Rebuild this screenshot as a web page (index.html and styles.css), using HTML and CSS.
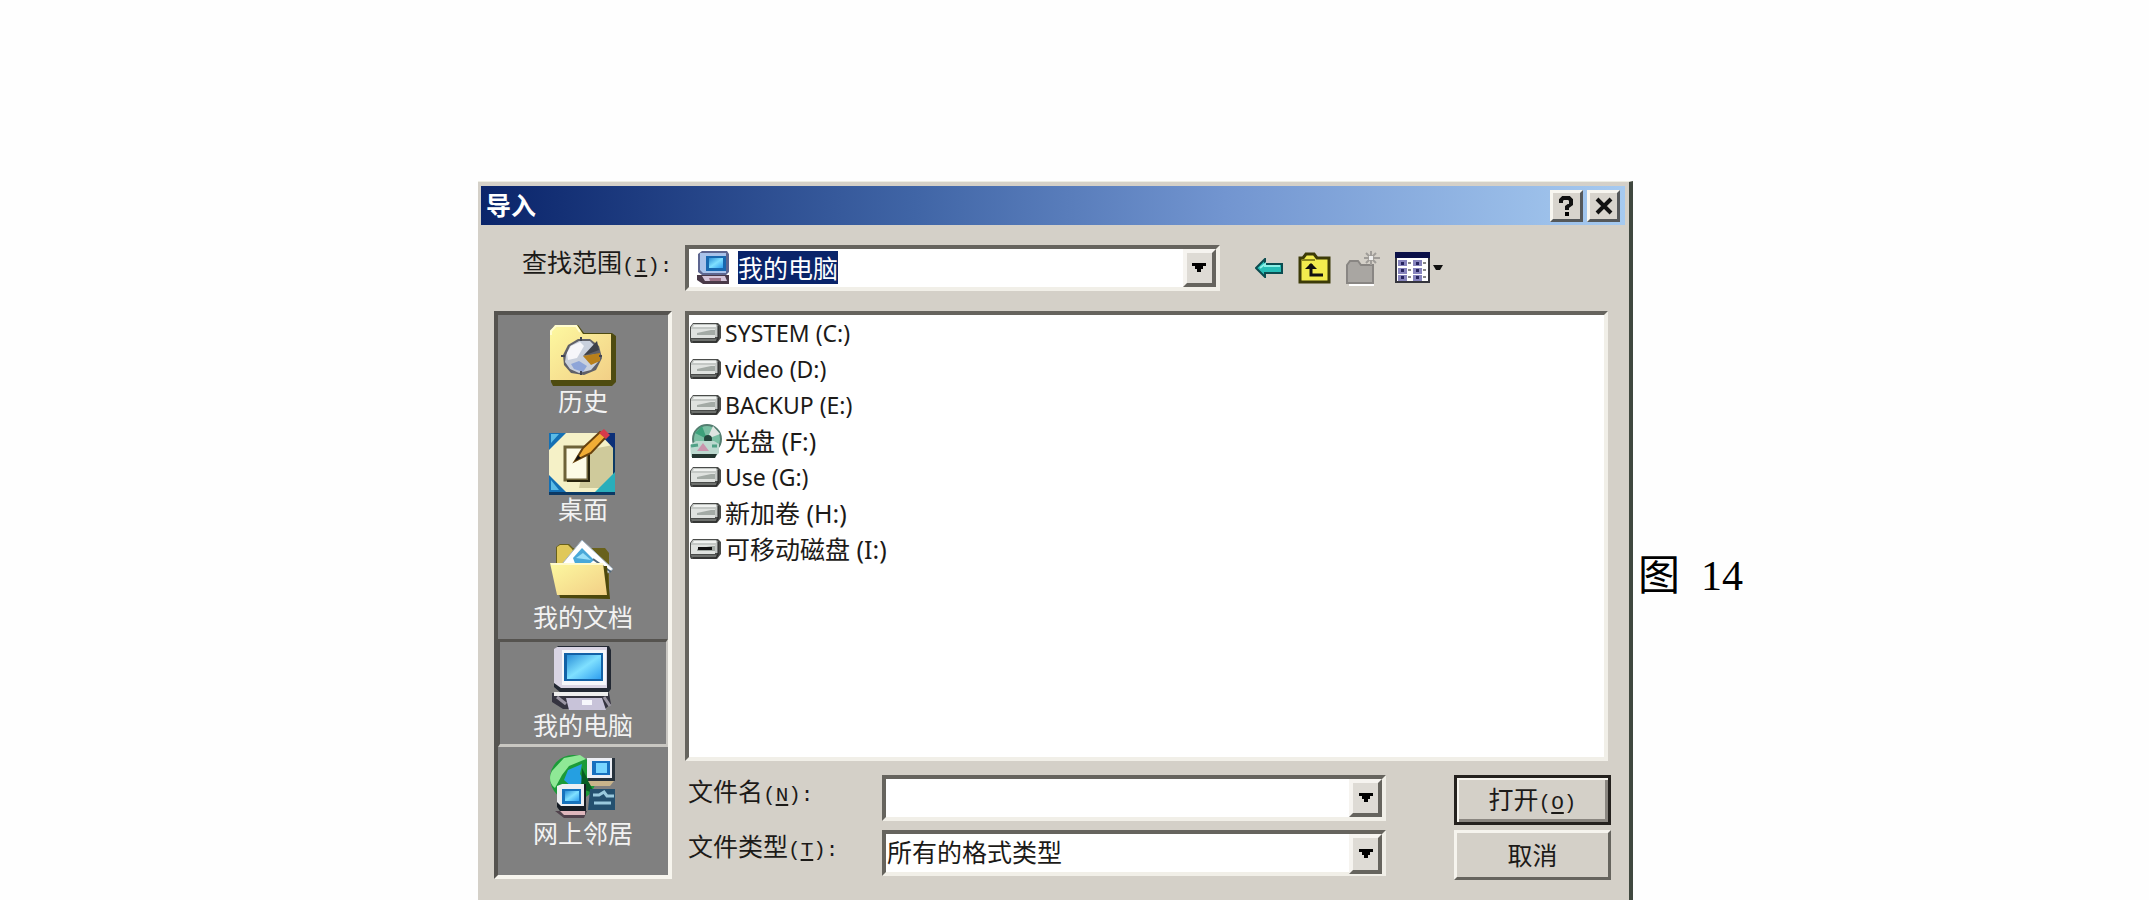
FILE: index.html
```html
<!DOCTYPE html>
<html lang="zh-CN">
<head>
<meta charset="utf-8">
<title>导入</title>
<link rel="stylesheet" href="styles.css">
</head>
<body>
<svg class="defs" aria-hidden="true">
  <defs>
    <linearGradient id="screen" x1="0" y1="0" x2="1" y2="1"><stop offset="0" stop-color="#2a8fd8"/><stop offset=".5" stop-color="#7fe0ff"/><stop offset="1" stop-color="#2f9ff0"/></linearGradient>
    <linearGradient id="paper" x1="0" y1="0" x2="1" y2="1"><stop offset="0" stop-color="#fdf9a0"/><stop offset="1" stop-color="#f2cf86"/></linearGradient>
    <symbol id="drive" viewBox="0 0 33 22">
      <path d="M4 1h25l3 3v12l-4 5H2l-1-2V5z" fill="#4a4c4a"/>
      <path d="M4 2h23l2 2v11H2V5z" fill="#c4c8c5"/>
      <path d="M5 3h22v2H4z" fill="#f0f2f0"/>
      <path d="M2 7v9h24V7z" fill="#dfe2df"/>
      <path d="M8 11l14-3h4v5H8z" fill="#a3aaa5"/>
      <path d="M2 17h25v2H3z" fill="#6d706d"/>
      <path d="M4 20h23l2-3v-13" fill="none" stroke="#222" stroke-width="1"/>
    </symbol>
    <symbol id="down" viewBox="0 0 16 10"><path d="M1 0h14v3h-3v3h-2v3H6V6H4V3H1z" fill="#000"/></symbol>
  </defs>
</svg>
<main class="page">
  <section class="dialog" aria-label="导入">
    <header class="titlebar">
      <h1>导入</h1>
      <button class="capbtn" aria-label="帮助"><svg width="17" height="20" viewBox="0 0 17 20"><path d="M3 7V4l2-2h6l2 2v4l-4 3v3" fill="none" stroke="#111" stroke-width="4"/><path d="M7 16h4v4H7z"/></svg></button>
      <button class="capbtn" aria-label="关闭"><svg width="18" height="18" viewBox="0 0 18 18"><path d="M2 2l14 14M16 2L2 16" stroke="#111" stroke-width="4"/></svg></button>
    </header>

    <div class="lookrow">
      <label for="look">查找范围<span class="key">(<u>I</u>):</span></label>
      <div class="combo look">
        <select id="look"><option>我的电脑</option></select>
        <svg class="pc" width="33" height="34" viewBox="0 0 33 34"><path d="M1 3l4-3h25l2 3v18l-3 3H5l-4-3z" fill="#5d6690"/><path d="M3 2h26v20H6l-3-3z" fill="#a9c3ea"/><path d="M9 5h20v15H9z" fill="#1768b0"/><path d="M12 7h14v10H12z" fill="url(#screen)"/><path d="M0 24h32v9H6l-6-4z" fill="#493947"/><path d="M5 25h23l2 5H8z" fill="#d4c4d8"/><path d="M12 27h12v3H13z" fill="#9b7286"/></svg>
        <span class="arrow"><svg width="16" height="10"><use href="#down"/></svg></span>
      </div>
      <div class="tools">
        <button aria-label="后退"><svg width="28" height="20" viewBox="0 0 28 20"><path d="M1 10L10 1v5h17v9H10v4z" fill="#27bdb6" stroke="#0b4c50" stroke-width="2"/><path d="M5 10l5-4v2h15" fill="none" stroke="#8af0e6" stroke-width="2"/></svg></button>
        <button aria-label="向上一级"><svg width="33" height="32" viewBox="0 0 33 32"><path d="M2 30V6h3l3-4h8l3 4h12v24z" fill="#f2ec4e" stroke="#3c3a08" stroke-width="3"/><path d="M4 8h13" stroke="#8d891e" stroke-width="2"/><path d="M13 12v11h12" fill="none" stroke="#111" stroke-width="3"/><path d="M7 17l6-6 6 6z" fill="#111"/></svg></button>
        <button aria-label="新建文件夹" disabled><svg width="34" height="36" viewBox="0 0 34 36"><path d="M3 33h25v3H3z" fill="#fff"/><path d="M1 33V15l3-4h8l3 4h12v18z" fill="#a9a6a2" stroke="#898683" stroke-width="2"/><path d="M25 1v14M18 8h16M20 3l10 10M30 3L20 13" stroke="#a09d99" stroke-width="2"/><path d="M23 6h4v4h-4z" fill="#eee"/></svg></button>
        <button aria-label="查看菜单"><svg width="48" height="31" viewBox="0 0 48 31"><path d="M1 1h33v29H1z" fill="#fff" stroke="#35353d" stroke-width="2"/><path d="M0 0h35v6H0z" fill="#0b1048"/><g fill="#8784bd"><path d="M3 8h9v6H3zM3 16h9v6H3zM3 23h9v6H3zM18 8h9v6h-9zM18 16h9v6h-9zM18 23h9v6h-9z"/></g><g fill="#27245f"><path d="M6 10h3v3H6zM6 17h3v3H6zM6 24h3v3H6zM21 10h3v3h-3zM21 17h3v3h-3zM21 24h3v3h-3z"/></g><path d="M13 11h3M13 18h3M13 25h3M28 11h3M28 18h3M28 25h3" stroke="#888" stroke-width="2"/><path d="M38 13h10l-3 5h-4z" fill="#111"/></svg></button>
      </div>
    </div>

    <div class="body">
      <nav class="places">
        <button><svg viewBox="0 0 68 66"><path d="M2 60V10l5-7h22l6 8h28l4 3v46l-4 4H4z" fill="#4e4b10"/><path d="M1 58V10l5-7h22l6 9h28v46z" fill="url(#paper)"/><path d="M2 13V9l5-5h20l4 6" fill="none" stroke="#fffcd0" stroke-width="2"/><path d="M14 33l5-10 10-6h12l9 7 3 12-6 12-12 5-13-2-7-8z" fill="#5f6068"/><path d="M17 33l4-9 9-5h11l6 6-12 9 14-2v8l-7 8-12 3-9-4-5-7z" fill="#c9d0dd"/><path d="M18 31l4-7 9-4 4 4-7 12-9 2z" fill="#f6f6fa"/><path d="M22 42l8-3 8 5-4 6-9-3z" fill="#8ea5d8"/><path d="M34 34l14-15 2 9z" fill="#3e4149"/><path d="M34 34l17-3v8l-9 4z" fill="#b9801b"/><path d="M12 34h4M32 15v4M32 49v4M50 34h3" stroke="#414552" stroke-width="2"/></svg>历史</button>
        <button><svg viewBox="0 0 68 66"><path d="M0 3h66v62H0z" fill="#0c3964"/><path d="M0 3h64v59H0z" fill="#f5f1c7"/><path d="M38 20l26-5v43H30z" fill="#cfca9b"/><path d="M0 3h17L0 20zM0 45l17 17H0z" fill="#1470b4"/><path d="M2 4h8l-8 9zM2 50l8 10H2z" fill="#5bbbe6"/><path d="M66 20L50 3h16z" fill="#0b2f78"/><path d="M66 42L46 62h20z" fill="#29aebb"/><path d="M16 17h23v33H16z" fill="#fdfbe6" stroke="#6e6338" stroke-width="3"/><path d="M40 18v33H18" fill="none" stroke="#29250e" stroke-width="2"/><path d="M26 31l8-13L51 2l6 5-15 16z" fill="#f0ad35" stroke="#69430d" stroke-width="2"/><path d="M26 31l3-6 3 3z" fill="#111"/><path d="M50 3l5-4 6 6-4 4z" fill="#d53a4b"/></svg>桌面</button>
        <button><svg viewBox="0 0 68 66"><path d="M7 30V9l4-3h9l4 4h32l4 5v43H12z" fill="#69611b"/><path d="M8 28V9l3-2h8l4 4 10 17z" fill="#e0c85a"/><path d="M13 26L33 2l31 29-5 4z" fill="#fff" stroke="#a2b4c4"/><path d="M24 20l9-10 12 12-7 6H27z" fill="#49a8d8"/><path d="M27 20l7-5 8 7z" fill="#98dff8"/><path d="M44 21l18 13" stroke="#51687a" stroke-width="2"/><path d="M11 60L4 28h54l3 33z" fill="#4d480c"/><path d="M8 57L1 25h53l4 32z" fill="url(#paper)"/><path d="M2 26h52" stroke="#fffacb" stroke-width="2"/></svg>我的文档</button>
        <button class="on" aria-current="true"><svg viewBox="0 0 68 66"><path d="M5 4l4-4h51l2 4v39l-3 4H12l-7-6z" fill="#222833"/><path d="M5 3l3-2h50v41H12l-7-5z" fill="#d9d5e4"/><path d="M13 4h44v35H13z" fill="#f5f7fb"/><path d="M15 7h39v28H15z" fill="#1261a6"/><path d="M18 9h34v24H18z" fill="url(#screen)"/><path d="M3 47h57l2 11-6 5H14L3 56z" fill="#353440"/><path d="M5 46h54v4H5z" fill="#eee"/><path d="M17 52h36l4 12H20z" fill="#c8c3d9"/><path d="M33 54h10v5H33z" fill="#f7f7fc"/><path d="M8 51l9 7M55 51l6 9" stroke="#9a95a3" stroke-width="3"/></svg>我的电脑</button>
        <button><svg viewBox="0 0 68 66"><circle cx="24" cy="24" r="23" fill="#1b9b38"/><path d="M3 17L15 4l16-3 6 4-17 7-7 9-7 13C0 30 0 22 3 17z" fill="#8fe896"/><path d="M19 16l14-6-2 10 5 8-13 5-8-7z" fill="#259fe1"/><path d="M33 14l8 16 4 9-13-4z" fill="#075f24"/><path d="M39 4h27v23H39z" fill="#26313b"/><path d="M38 4h25v20H38z" fill="#eceef4"/><path d="M43 7h18v14H43z" fill="#1770bf"/><path d="M47 9h11v10H47z" fill="#77d5ff"/><path d="M39 27h26l-4 5H42z" fill="#c9b48b"/><path d="M41 35h25v21H39z" fill="#24506f"/><path d="M44 41h6l5-3 3 4h7M45 49h17" fill="none" stroke="#9ac9dd" stroke-width="3"/><path d="M8 33l5-3h24v27H11l-3-4z" fill="#161d25"/><path d="M8 32l5-2h22v22H12l-4-4z" fill="#eceff3"/><path d="M13 35h19v15H13z" fill="#1673bd"/><path d="M16 37h14v10H16z" fill="url(#screen)"/><path d="M6 57h32l-3 7H15z" fill="#51434d"/><path d="M11 57h25v4H15z" fill="#dfb7bd"/></svg>网上邻居</button>
      </nav>

      <div class="main">
        <ul class="files">
          <li class="latin"><svg><use href="#drive"/></svg>SYSTEM (C:)</li>
          <li class="latin"><svg><use href="#drive"/></svg>video (D:)</li>
          <li class="latin"><svg><use href="#drive"/></svg>BACKUP (E:)</li>
          <li><svg class="cd" viewBox="0 0 33 34"><circle cx="18" cy="15" r="14" fill="#79bea2" stroke="#547d70" stroke-width="2"/><path d="M18 15L24 2l7 8z" fill="#dfe5e1"/><path d="M18 15L6 9l7-7z" fill="#3ca17a"/><circle cx="19" cy="15" r="4" fill="#24463c"/><path d="M1 21l6-4h18l5 3v9l-4 4H2z" fill="#bcd9cf"/><path d="M3 30h25l-2 4H3z" fill="#243630"/><path d="M8 27l6-8 6 8z" fill="#c994ad"/><path d="M2 22l7-1M23 22h5" stroke="#4fa286" stroke-width="3"/></svg>光盘 (F:)</li>
          <li class="latin"><svg><use href="#drive"/></svg>Use (G:)</li>
          <li><svg><use href="#drive"/></svg>新加卷 (H:)</li>
          <li><svg viewBox="0 0 33 22"><use href="#drive"/><path d="M9 9h14v3H9z" fill="#111"/></svg>可移动磁盘 (I:)</li>
        </ul>
        <form class="form">
          <label for="name">文件名<span class="key">(<u>N</u>):</span></label>
          <div class="combo">
            <input id="name" type="text">
            <span class="arrow"><svg width="16" height="10"><use href="#down"/></svg></span>
          </div>
          <button class="btn default" type="button">打开<span class="key">(<u>O</u>)</span></button>
          <label for="type">文件类型<span class="key">(<u>T</u>):</span></label>
          <div class="combo">
            <select id="type"><option>所有的格式类型</option></select>
            <span class="arrow"><svg width="16" height="10"><use href="#down"/></svg></span>
          </div>
          <button class="btn" type="button">取消</button>
        </form>
      </div>
    </div>
  </section>
  <p class="caption">图&nbsp; 14</p>
</main>
</body>
</html>
```
FILE: styles.css
```css
* { box-sizing: border-box; }
html, body { margin: 0; }
body {
  background: #fefefe;
  color: #1c1a18;
  font: 25px/36px "Noto Sans", "Noto Sans CJK SC", sans-serif;
  overflow: hidden;
}
button, input, select { font: inherit; color: inherit; border-radius: 0; }
button { padding: 0; background: none; border: 0; }
svg { display: block; flex: none; }
.defs { position: absolute; width: 0; height: 0; }
.key { font: 21px/32px "Liberation Mono", monospace; }
.key u { text-underline-offset: 3px; }

.page {
  display: grid;
  grid-template-columns: minmax(0, 478fr) minmax(0, 1155fr) minmax(0, 516fr);
  height: 100vh;
  padding-top: 181px;
}
.dialog {
  grid-column: 2;
  padding: 4px 4px 18px 3px;
  background: #d4d0c8;
  border-top: 1px solid #eeeee4;
  border-right: 4px solid #40483f;
}
.titlebar {
  display: flex;
  align-items: center;
  gap: 4px;
  height: 39px;
  padding: 0 5px 0 5px;
  background: linear-gradient(90deg, #0a246a, #4065a6 38%, #7295d0 65%, #a6caf0);
}
.titlebar h1 {
  flex: 1;
  margin: 0;
  padding-bottom: 2px;
  color: #fff;
  font-size: 25px;
  font-weight: 700;
}
.capbtn {
  display: grid;
  place-items: center;
  width: 33px;
  height: 32px;
  background: #d8d4cd;
  border: 3px solid;
  border-color: #f8f6f0 #55585a #55585a #f8f6f0;
}

.lookrow {
  display: grid;
  grid-template-columns: 163px minmax(0, 534fr) minmax(0, 405fr);
  align-items: center;
  padding: 19px 0 0 41px;
}
.lookrow label { padding-bottom: 8px; }

.combo {
  display: grid;
  align-items: center;
  height: 46px;
  background: #fff;
  border: 4px solid;
  border-color: #66645e #f1efe8 #f1efe8 #66645e;
}
.combo > * { grid-area: 1 / 1; }
.combo input, .combo select {
  width: 100%;
  height: 100%;
  padding: 0 36px 0 1px;
  background: none;
  border: 0;
  outline: 0;
  appearance: none;
}
.form select { padding-bottom: 4px; }
.combo.look select {
  padding-left: 49px;
  color: #fff;
  background: linear-gradient(#0a246a, #0a246a) 49px center / 100px 33px no-repeat;
}
.pc { margin-left: 8px; pointer-events: none; }
.arrow {
  justify-self: end;
  display: grid;
  place-items: center;
  width: 33px;
  height: 100%;
  background: #dedbd5;
  border: 4px solid;
  border-color: #f6f4f0 #66645e #66645e #f6f4f0;
  pointer-events: none;
}

.tools {
  display: flex;
  align-items: center;
  gap: 15px;
  padding-left: 35px;
}

.body {
  display: grid;
  grid-template-columns: 178px minmax(0, 1fr);
  gap: 13px;
  padding: 20px 17px 0 13px;
}
.places {
  display: flex;
  flex-direction: column;
  height: 568px;
  background: #808080;
  border: 4px solid;
  border-color: #55534f #f7f5ee #f7f5ee #55534f;
}
.places button {
  display: flex;
  flex-direction: column;
  align-items: center;
  height: 108px;
  padding-top: 4px;
  color: #f2f2f2;
  line-height: 26px;
  border: solid transparent;
  border-width: 3px 2px 3px 2px;
}
.places svg { width: 68px; height: 66px; overflow: visible; }
.places .on { border-color: #55534f #c9c7c2 #c9c7c2 #55534f; }

.files {
  height: 450px;
  margin: 0;
  list-style: none;
  padding: 0;
  background: #fff;
  border: 4px solid;
  border-color: #66645e #f1efe8 #f1efe8 #66645e;
}
.files li { display: flex; align-items: center; gap: 3px; height: 36px; }
.files .latin { font-size: 23px; }
.files svg { width: 33px; height: 22px; }
.files .cd { height: 34px; }

.form {
  display: grid;
  grid-template-columns: 197px minmax(0, 504fr) minmax(0, 68fr) minmax(0, 157fr);
  row-gap: 5px;
  margin-right: -3px;
  padding-top: 14px;
}
.form label { padding-left: 3px; line-height: 32px; }
.form .btn { grid-column: 4; }
.btn {
  height: 50px;
  background: #d4d0c8;
  border: 3px solid;
  border-color: #f6f4ee #66645e #66645e #f6f4ee;
}
.btn.default {
  border-color: #24211e;
  box-shadow: inset 2px 2px #f6f4ee, inset -3px -3px #8a8680;
}

.caption {
  margin: 0;
  padding: 365px 0 0 5px;
  color: #000;
  font: 42px/60px "Liberation Serif", "Noto Sans CJK SC", serif;
}
```
